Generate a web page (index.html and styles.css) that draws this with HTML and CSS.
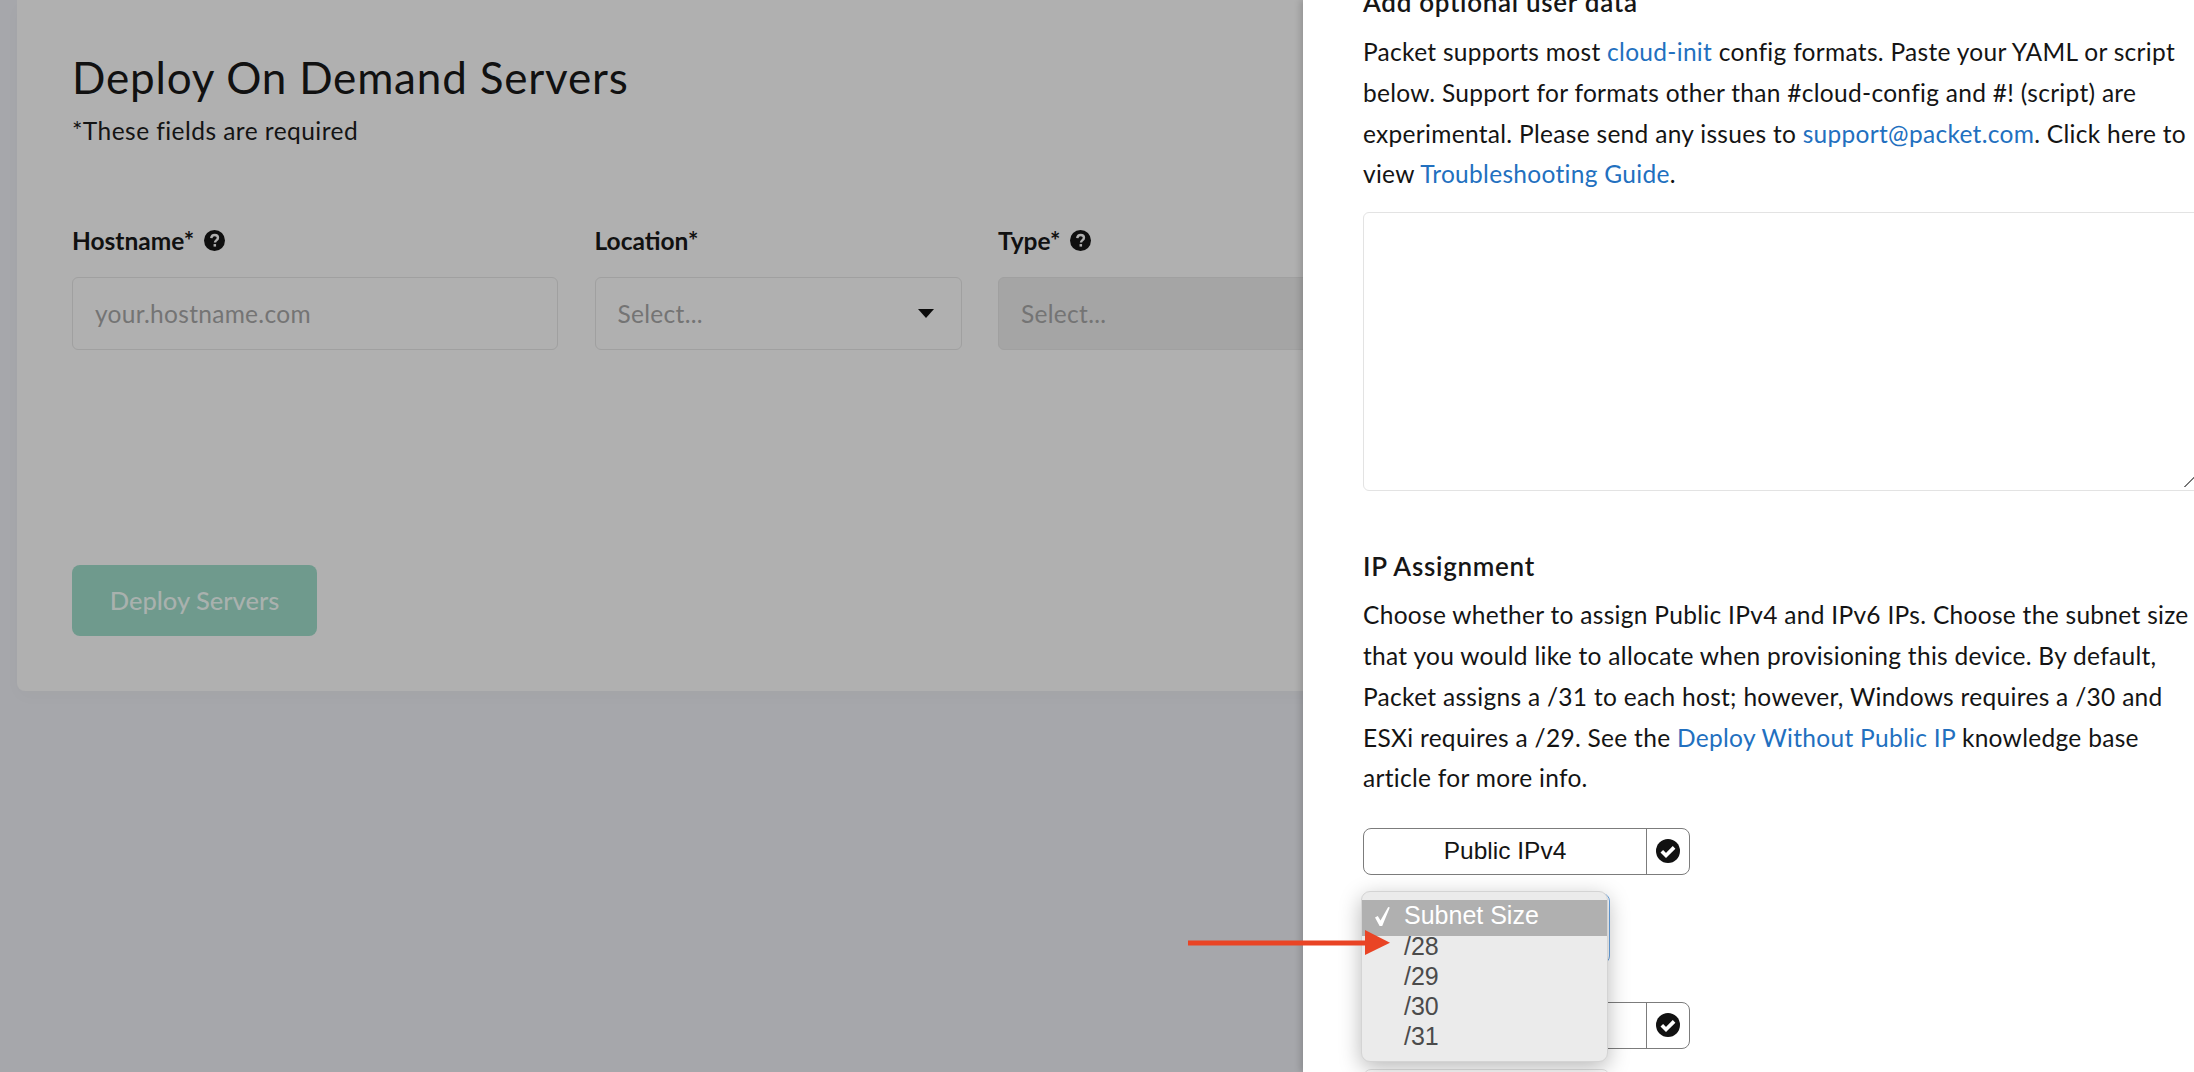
FILE: index.html
```html
<!DOCTYPE html>
<html lang="en">
<head>
    <meta charset="UTF-8" />
    <title>Deploy On Demand Servers</title>
    <link rel="stylesheet" href="styles.css">
</head>
<body>
    <svg class="icon-defs" width="0" height="0" aria-hidden="true">
        <symbol id="icon-help" viewBox="0 0 20 20">
            <circle cx="10" cy="10" r="10" fill="#0f0f0f"/>
            <path d="M6.9 7.7c.2-1.900 1.500-3 3.300-3 1.800 0 3.100 1.100 3.100 2.700 0 1.300-.8 1.900-1.600 2.500-.8.600-1.200 1-1.200 1.900" fill="none" stroke="#b0b0b0" stroke-width="2.300"/>
            <rect x="9.100" y="13.400" width="2.400" height="2.400" fill="#b0b0b0"/>
        </symbol>
        <symbol id="icon-check" viewBox="0 0 24 24">
            <circle cx="12" cy="12" r="12" fill="#111"/>
            <path d="M5.800 12.300l4.200 4.200 8.100-8.100" fill="none" stroke="#fff" stroke-width="3.700"/>
        </symbol>
    </svg>

    <div class="page">
        <main class="backdrop">
            <section class="card">
                <h1>Deploy On Demand Servers</h1>
                <p class="required-note">*These fields are required</p>

                <div class="fields">
                    <div class="field field-hostname">
                        <label>Hostname* <svg class="help"><use href="#icon-help"/></svg></label>
                        <div class="control placeholder">your.hostname.com</div>
                    </div>
                    <div class="field field-location">
                        <label>Location*</label>
                        <div class="control placeholder">Select...<span class="caret"></span></div>
                    </div>
                    <div class="field field-type">
                        <label>Type* <svg class="help"><use href="#icon-help"/></svg></label>
                        <div class="control control-disabled placeholder">Select...</div>
                    </div>
                </div>

                <button class="deploy-btn" type="button">Deploy Servers</button>
            </section>
        </main>

        <aside class="drawer">
            <h3 class="first-heading">Add optional user data</h3>
            <p>Packet supports most <a href="#">cloud-init</a> config formats. Paste your YAML or script<br>
            below. Support for formats other than #cloud-config and #! (script) are<br>
            experimental. Please send any issues to <a href="#">support@packet.com</a>. Click here to<br>
            view <a href="#">Troubleshooting Guide</a>.</p>

            <div class="userdata"><span class="resize-grip"></span></div>

            <h3 class="ip-heading">IP Assignment</h3>
            <p>Choose whether to assign Public IPv4 and IPv6 IPs. Choose the subnet size<br>
            that you would like to allocate when provisioning this device. By default,<br>
            Packet assigns a /31 to each host; however, Windows requires a /30 and<br>
            ESXi requires a /29. See the <a href="#">Deploy Without Public IP</a> knowledge base<br>
            article for more info.</p>

            <div class="ip-options">
                <div class="toggle">
                    <span class="toggle-label">Public IPv4</span>
                    <span class="toggle-check"><svg><use href="#icon-check"/></svg></span>
                </div>
                <div class="subnet-select"></div>
                <div class="toggle toggle-second">
                    <span class="toggle-label">Public IPv6</span>
                    <span class="toggle-check"><svg><use href="#icon-check"/></svg></span>
                </div>
                <div class="subnet-select subnet-select-idle"></div>

                <!-- Native select popup, open over the rows -->
                <ul class="select-menu">
                    <li class="selected">
                        <svg class="tick" viewBox="0 0 15 19"><polygon points="0,10.500 2.800,9 5.500,13.500 13.200,0 14.800,.6 7.200,19 4.600,19" fill="#fff"/></svg>
                        Subnet Size
                    </li>
                    <li>/28</li>
                    <li>/29</li>
                    <li>/30</li>
                    <li>/31</li>
                </ul>
            </div>
        </aside>

        <svg class="callout" width="210" height="26" viewBox="0 0 210 26" aria-hidden="true">
            <rect x="0" y="10.500" width="180" height="5" fill="#e94425"/>
            <polygon points="177,0 202,12.800 177,25" fill="#e94425"/>
        </svg>
    </div>
</body>
</html>
```

FILE: styles.css
```css
/* Reset some default styles */
* {
    margin: 0;
    padding: 0;
    box-sizing: border-box;
}

body {
    font-family: Lato, 'Open Sans', sans-serif;
    font-size: 24.500px;
    letter-spacing: 0.300px;
    color: #141414;
    background-color: #a6a7ab;
    overflow: hidden;
    height: 1072px;
}

.icon-defs {
    position: absolute;
}

.page {
    position: relative;
    display: flex;
    height: 1072px;
    overflow: hidden;
}

/* Dimmed page behind the drawer */
.backdrop {
    width: 1303px;
    flex-shrink: 0;
    padding-left: 17px;
    overflow: hidden;
}

.card {
    width: 1500px;
    height: 691px;
    padding: 52px 55px 0;
    background-color: #b0b0b0;
    border-radius: 0 0 0 8px;
    box-shadow: 0 6px 18px rgba(0, 0, 0, 0.02);
}

.card h1 {
    font-size: 44px;
    font-weight: 400;
    letter-spacing: 0.800px;
    line-height: 50px;
    color: #111;
}

.required-note {
    margin-top: 14.500px;
    line-height: 28px;
    letter-spacing: 0.450px;
}

.fields {
    display: flex;
    gap: 36.500px;
    margin-top: 83.500px;
}

.field {
    flex-shrink: 0;
}

.field label {
    display: flex;
    align-items: center;
    gap: 10px;
    height: 24px;
    font-weight: 700;
    letter-spacing: 0;
    color: #111;
}

.help {
    width: 21px;
    height: 21px;
}

.field-hostname {
    width: 486px;
}

.field-location {
    width: 367px;
}

.field-type {
    width: 600px;
}

.control {
    display: flex;
    align-items: center;
    justify-content: space-between;
    height: 73px;
    margin-top: 25px;
    padding: 0 27px 0 22px;
    border: 1.500px solid #a0a0a0;
    border-radius: 6px;
}

.placeholder {
    color: #747474;
}

.control-disabled {
    background-color: #a5a5a5;
}

.caret {
    width: 0;
    height: 0;
    border-left: 8.500px solid transparent;
    border-right: 8.500px solid transparent;
    border-top: 9px solid #0c0c0c;
}

.deploy-btn {
    display: block;
    width: 245px;
    height: 71px;
    margin-top: 215px;
    padding-bottom: 2px;
    border: none;
    border-radius: 8px;
    background-color: #6f9a8d;
    color: #a9b1ae;
    font-family: inherit;
    font-size: 25.500px;
    font-weight: 500;
}

/* Right-hand drawer */
.drawer {
    flex: 1;
    min-width: 0;
    padding-left: 60px;
    background-color: #fff;
    box-shadow: -3px 0 6px rgba(0, 0, 0, 0.15);
    z-index: 1;
}

.drawer h3 {
    font-size: 26px;
    font-weight: 600;
    letter-spacing: 0.700px;
    line-height: 41px;
    color: #161616;
}

.first-heading {
    margin-top: -18px;
    margin-bottom: 9px;
}

.drawer p {
    line-height: 40.800px;
    white-space: nowrap;
}

.drawer a {
    color: #2270bf;
    text-decoration: none;
}

.userdata {
    position: relative;
    height: 279px;
    margin-top: 17px;
    margin-right: -10px;
    border: 1.500px solid #e3e3e3;
    border-radius: 6px;
}

.resize-grip {
    position: absolute;
    right: 7px;
    bottom: 3px;
    width: 12px;
    height: 12px;
    background: linear-gradient(135deg, transparent 48%, #777 48%, #777 56%, transparent 56%);
}

.ip-heading {
    margin-top: 55px;
    margin-bottom: 8px;
}

.ip-options {
    position: relative;
    margin-top: 28.500px;
    letter-spacing: 0;
}

.toggle {
    display: flex;
    width: 327px;
    height: 47px;
    border: 1.500px solid #7c7c7c;
    border-radius: 8px;
    font-family: 'Liberation Sans', Arial, sans-serif;
}

.toggle-label {
    flex: 1;
    line-height: 44px;
    text-align: center;
}

.toggle-check {
    display: flex;
    align-items: center;
    justify-content: center;
    width: 43px;
    border-left: 1.500px solid #7c7c7c;
}

.toggle-check svg {
    width: 24px;
    height: 24px;
}

.subnet-select {
    width: 247px;
    height: 71px;
    margin-top: 18px;
    border: 1.500px solid #6aa5e3;
    border-radius: 8px;
}

.toggle-second {
    margin-top: 38px;
}

.subnet-select-idle {
    margin-top: 20px;
    border-color: #e3e3e3;
}

.select-menu {
    position: absolute;
    top: 63px;
    left: -2px;
    width: 247px;
    height: 171px;
    padding-top: 8px;
    list-style: none;
    background-color: #ebebeb;
    border: 1px solid #d4d4d4;
    border-radius: 9px;
    box-shadow: 0 6px 22px rgba(0, 0, 0, 0.28);
    font-family: 'Liberation Sans', Arial, sans-serif;
    font-size: 25px;
    color: #4b4b4b;
}

.select-menu li {
    height: 30px;
    padding-left: 42px;
    line-height: 30px;
}

.select-menu .selected {
    position: relative;
    height: 36px;
    margin-bottom: -5px;
    line-height: 30px;
    background-color: #b0b0b0;
    color: #fff;
}

.tick {
    position: absolute;
    left: 13px;
    top: 7px;
    width: 15px;
    height: 19px;
}

/* Red annotation arrow over the drawer edge */
.callout {
    position: absolute;
    left: 1188px;
    top: 930px;
    z-index: 2;
}
```
